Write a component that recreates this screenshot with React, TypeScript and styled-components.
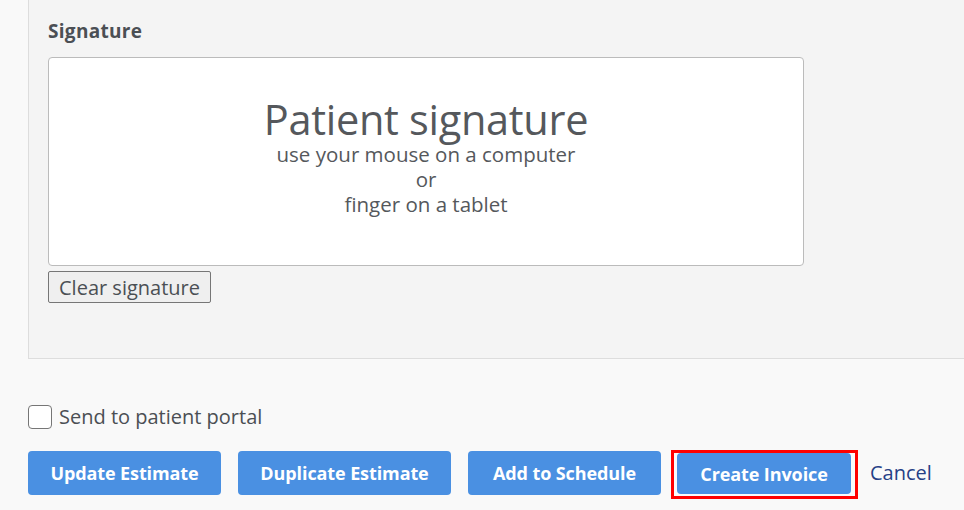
import React from "react";
import styled, { createGlobalStyle } from "styled-components";

const Global = createGlobalStyle`
  html, body { margin: 0; padding: 0; background: #f9f9f9; }
  body { font-family: "Open Sans", "Liberation Sans", Arial, sans-serif; color: #4b4f54; }
  * { box-sizing: border-box; }
`;

const Page = styled.div`
  width: 964px;
  height: 510px;
  overflow: hidden;
  display: flex;
  flex-direction: column;
`;

const Panel = styled.section`
  margin-left: 28px;
  background: #f4f4f4;
  border-left: 1px solid #dddddd;
  border-bottom: 1px solid #dddddd;
  padding: 20px 0 55px 19px;
  display: flex;
  flex-direction: column;
  align-items: flex-start;
`;

const Label = styled.div`
  font-size: 19px;
  font-weight: 700;
  line-height: 22px;
  color: #4b4f54;
  margin-bottom: 15px;
  letter-spacing: 0.3px;
`;

const SignatureBox = styled.div`
  width: 756px;
  height: 209px;
  background: #ffffff;
  border: 1px solid #bbbbbb;
  border-radius: 4px;
  padding-top: 38px;
  display: flex;
  flex-direction: column;
  align-items: center;
  text-align: center;
`;

const SigTitle = styled.div`
  font-size: 41.5px;
  line-height: 46px;
  color: #55585c;
  letter-spacing: -0.3px;
`;

const SigHint = styled.div`
  font-size: 20.5px;
  line-height: 25px;
  color: #55585c;
`;

const ClearButton = styled.button`
  margin-top: 5px;
  height: 32px;
  padding: 0 10px;
  font-family: inherit;
  font-size: 20px;
  color: #4b4f54;
  background: #efefef;
  border: 1px solid #767676;
  border-radius: 2px;
`;

const CheckRow = styled.label`
  margin: 46px 0 0 28px;
  display: flex;
  align-items: center;
  gap: 7px;
  font-size: 20px;
  line-height: 24px;
  color: #4b4f54;
`;

const Box = styled.span`
  width: 24px;
  height: 24px;
  background: #ffffff;
  border: 1px solid #767676;
  border-radius: 4px;
`;

const Actions = styled.div`
  margin: 22px 0 0 28px;
  display: flex;
  align-items: flex-start;
  gap: 17px;
`;

const Primary = styled.button<{ $w: number }>`
  width: ${(p) => p.$w}px;
  height: 44px;
  background: #4a90e2;
  color: #ffffff;
  border: none;
  border-radius: 4px;
  font-family: inherit;
  font-weight: 700;
  font-size: 18px;
  letter-spacing: -0.1px;
  padding: 0;
`;

const Highlight = styled.span`
  display: inline-flex;
  border: 3px solid #ff0000;
  padding: 0 4px 2px 3px;
  margin: -1px 0 0 -7px;
  background: #fafafa;
`;

const InvoiceButton = styled(Primary)`
  height: 41px;
`;

const CancelLink = styled.a`
  font-size: 20px;
  line-height: 44px;
  color: #263f86;
  text-decoration: none;
  margin-left: -5px;
`;

export default function App() {
  return (
    <Page>
      <Global />
      <Panel>
        <Label>Signature</Label>
        <SignatureBox>
          <SigTitle>Patient signature</SigTitle>
          <SigHint>use your mouse on a computer</SigHint>
          <SigHint>or</SigHint>
          <SigHint>finger on a tablet</SigHint>
        </SignatureBox>
        <ClearButton>Clear signature</ClearButton>
      </Panel>
      <CheckRow>
        <Box />
        Send to patient portal
      </CheckRow>
      <Actions>
        <Primary $w={193}>Update Estimate</Primary>
        <Primary $w={213}>Duplicate Estimate</Primary>
        <Primary $w={193}>Add to Schedule</Primary>
        <Highlight>
          <InvoiceButton $w={174}>Create Invoice</InvoiceButton>
        </Highlight>
        <CancelLink href="#">Cancel</CancelLink>
      </Actions>
    </Page>
  );
}
